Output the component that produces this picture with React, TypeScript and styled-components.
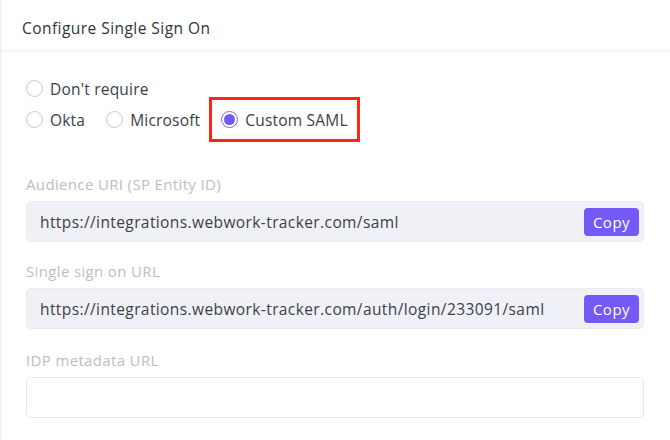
import React from "react";
import styled, { createGlobalStyle } from "styled-components";

const Global = createGlobalStyle`
  html, body { margin: 0; padding: 0; background: #ffffff; }
  body { font-family: "Open Sans", "DejaVu Sans", sans-serif; }
  * { box-sizing: border-box; }
`;

const Card = styled.div`
  width: 670px;
  height: 440px;
  background: #fff;
  border-left: 2px solid #f1f2f5;
  display: flex;
  flex-direction: column;
  overflow: hidden;
`;

const Header = styled.div`
  height: 52px;
  display: flex;
  align-items: center;
  padding: 5px 0 0 20px;
  border-bottom: 2px solid #f4f5f7;
  font-size: 15.5px;
  letter-spacing: 0.45px;
  color: #2f333c;
  font-weight: 500;
`;

const Body = styled.div`
  padding: 21px 26px 0 24px;
  display: flex;
  flex-direction: column;
`;

const RadioRow = styled.div`
  display: flex;
  align-items: center;
  height: 31px;
`;

const Option = styled.label<{ $highlight?: boolean; $gap?: number }>`
  display: flex;
  align-items: center;
  gap: 7px;
  font-size: 15.5px;
  letter-spacing: 0.2px;
  color: #3a3e47;
  margin-right: ${(p) => p.$gap ?? 21}px;
  ${(p) =>
    p.$highlight
      ? `border: 3px solid #fa2812; padding: 0 9px 0 9px; height: 45px;`
      : ``}
`;

const Circle = styled.span<{ $checked?: boolean }>`
  width: 17px;
  height: 17px;
  border-radius: 50%;
  border: 1px solid ${(p) => (p.$checked ? "#7a63f5" : "#c9c8d9")};
  display: flex;
  align-items: center;
  justify-content: center;
  flex: none;
  &::after {
    content: "";
    display: ${(p) => (p.$checked ? "block" : "none")};
    width: 11px;
    height: 11px;
    border-radius: 50%;
    background: #7159f7;
  }
`;

const Field = styled.div<{ $top: number }>`
  margin-top: ${(p) => p.$top}px;
  display: flex;
  flex-direction: column;
  gap: 7px;
`;

const Label = styled.div`
  font-size: 15px;
  letter-spacing: 0.35px;
  color: #bbbec6;
  height: 20px;
  line-height: 20px;
`;

const InputBox = styled.div<{ $filled?: boolean }>`
  height: 41px;
  width: 618px;
  border-radius: 5px;
  border: 1px solid ${(p) => (p.$filled ? "#e9ebf1" : "#e6e7ec")};
  background: ${(p) => (p.$filled ? "#eff1f6" : "#ffffff")};
  display: flex;
  align-items: center;
  justify-content: space-between;
  padding: 0 4px 0 13px;
`;

const Value = styled.span`
  font-size: 15.5px;
  letter-spacing: 0.4px;
  color: #3d4049;
`;

const CopyButton = styled.button`
  height: 28px;
  width: 55px;
  border: none;
  border-radius: 4px;
  background: #7459f6;
  color: #fff;
  font-family: inherit;
  font-size: 15px;
  letter-spacing: 0.5px;
  padding: 0;
`;

export default function App() {
  return (
    <>
      <Global />
      <Card>
        <Header>Configure Single Sign On</Header>
        <Body>
          <RadioRow>
            <Option>
              <Circle />
              Don't require
            </Option>
          </RadioRow>
          <RadioRow>
            <Option>
              <Circle />
              Okta
            </Option>
            <Option $gap={9}>
              <Circle />
              Microsoft
            </Option>
            <Option $highlight>
              <Circle $checked />
              Custom SAML
            </Option>
          </RadioRow>
          <Field $top={39}>
            <Label>Audience URI (SP Entity ID)</Label>
            <InputBox $filled>
              <Value>https://integrations.webwork-tracker.com/saml</Value>
              <CopyButton>Copy</CopyButton>
            </InputBox>
          </Field>
          <Field $top={19}>
            <Label>Single sign on URL</Label>
            <InputBox $filled>
              <Value>https://integrations.webwork-tracker.com/auth/login/233091/saml</Value>
              <CopyButton>Copy</CopyButton>
            </InputBox>
          </Field>
          <Field $top={21}>
            <Label>IDP metadata URL</Label>
            <InputBox />
          </Field>
        </Body>
      </Card>
    </>
  );
}
